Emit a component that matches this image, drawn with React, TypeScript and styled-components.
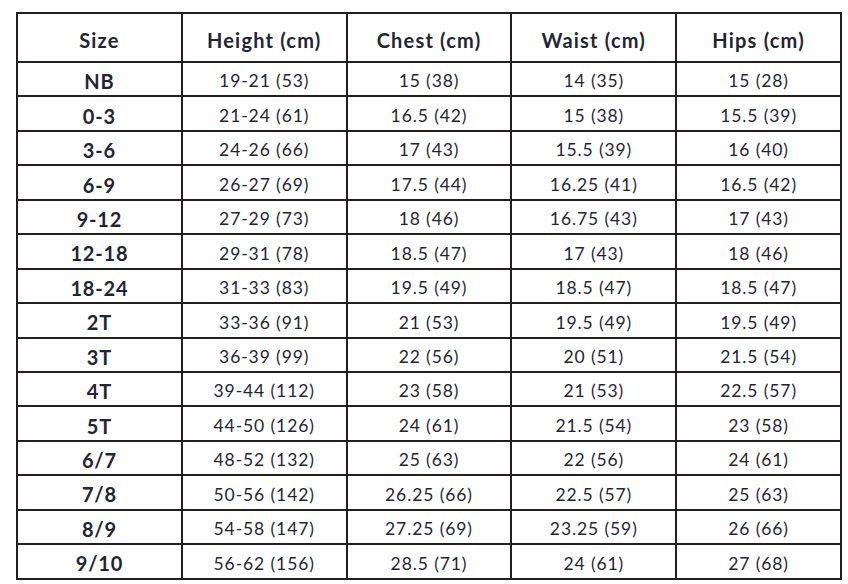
import React from "react";
import styled, { createGlobalStyle } from "styled-components";

const Global = createGlobalStyle`
  html, body { margin: 0; padding: 0; background: #ffffff; }
  body { font-family: Lato, "Open Sans", sans-serif; }
`;

const Page = styled.div`
  padding: 12px 0 0 16px;
  width: 848px;
  height: 584px;
  box-sizing: border-box;
  background: #fff;
`;

const Table = styled.table`
  border-collapse: collapse;
  table-layout: fixed;
  width: 826px;
  color: #1f2535;
  border: 2px solid #231f20;
`;

const HeadCell = styled.th`
  border: 2px solid #231f20;
  height: 49px;
  padding: 5px 0 0 0;
  box-sizing: border-box;
  font-size: 20px;
  font-weight: 700;
  letter-spacing: 1.2px;
  text-align: center;
  vertical-align: middle;
  line-height: 1;
`;

const Cell = styled.td<{ $bold?: boolean }>`
  border: 2px solid #231f20;
  height: 34.45px;
  padding: 4px 0 0 0;
  box-sizing: border-box;
  text-align: center;
  vertical-align: middle;
  font-size: ${(p) => (p.$bold ? "20px" : "17.5px")};
  font-weight: ${(p) => (p.$bold ? 700 : 400)};
  letter-spacing: ${(p) => (p.$bold ? "0.8px" : "0.9px")};
  line-height: 1;
`;

const headers = ["Size", "Height (cm)", "Chest (cm)", "Waist (cm)", "Hips (cm)"];

const rows: string[][] = [
  ["NB", "19-21 (53)", "15 (38)", "14 (35)", "15 (28)"],
  ["0-3", "21-24 (61)", "16.5 (42)", "15 (38)", "15.5 (39)"],
  ["3-6", "24-26 (66)", "17 (43)", "15.5 (39)", "16 (40)"],
  ["6-9", "26-27 (69)", "17.5 (44)", "16.25 (41)", "16.5 (42)"],
  ["9-12", "27-29 (73)", "18 (46)", "16.75 (43)", "17 (43)"],
  ["12-18", "29-31 (78)", "18.5 (47)", "17 (43)", "18 (46)"],
  ["18-24", "31-33 (83)", "19.5 (49)", "18.5 (47)", "18.5 (47)"],
  ["2T", "33-36 (91)", "21 (53)", "19.5 (49)", "19.5 (49)"],
  ["3T", "36-39 (99)", "22 (56)", "20 (51)", "21.5 (54)"],
  ["4T", "39-44 (112)", "23 (58)", "21 (53)", "22.5 (57)"],
  ["5T", "44-50 (126)", "24 (61)", "21.5 (54)", "23 (58)"],
  ["6/7", "48-52 (132)", "25 (63)", "22 (56)", "24 (61)"],
  ["7/8", "50-56 (142)", "26.25 (66)", "22.5 (57)", "25 (63)"],
  ["8/9", "54-58 (147)", "27.25 (69)", "23.25 (59)", "26 (66)"],
  ["9/10", "56-62 (156)", "28.5 (71)", "24 (61)", "27 (68)"],
];

export default function App() {
  return (
    <>
      <Global />
      <Page>
        <Table>
          <thead>
            <tr>
              {headers.map((h) => (
                <HeadCell key={h}>{h}</HeadCell>
              ))}
            </tr>
          </thead>
          <tbody>
            {rows.map((r) => (
              <tr key={r[0]}>
                {r.map((c, i) => (
                  <Cell key={i} $bold={i === 0}>
                    {c}
                  </Cell>
                ))}
              </tr>
            ))}
          </tbody>
        </Table>
      </Page>
    </>
  );
}
